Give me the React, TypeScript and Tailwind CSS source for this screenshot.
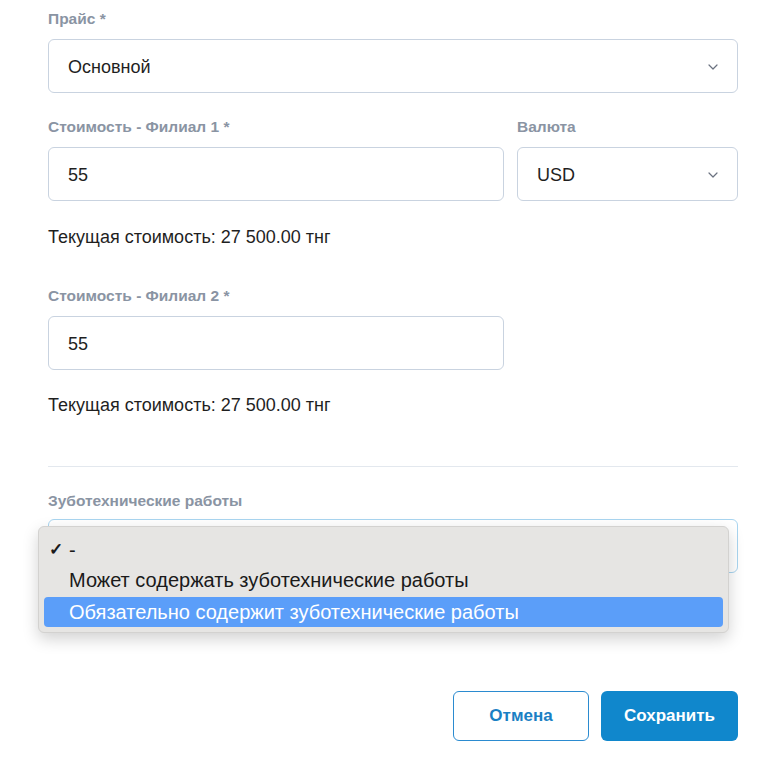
import React from 'react';

// Поле формы: подпись + контрол
const Label: React.FC<{ children: React.ReactNode; mb?: string }> = ({ children, mb = 'mb-[10px]' }) => (
  <div className={`h-5 leading-5 text-[15.5px] font-semibold text-[#8a94a3] ${mb}`}>{children}</div>
);

const Chevron = () => (
  <svg width="10" height="6" viewBox="0 0 10 6" fill="none" className="text-[#6b7280]">
    <path d="M1 1l4 4 4-4" stroke="currentColor" strokeWidth="1.2" strokeLinecap="round" strokeLinejoin="round" />
  </svg>
);

const SelectBox: React.FC<{ value: string }> = ({ value }) => (
  <div className="h-[54px] rounded-md border border-[#c9d3e0] bg-white flex items-center justify-between pl-[19px] pr-[19px] pt-[2px] text-[18px] text-[#1f1f1f]">
    <span>{value}</span>
    <Chevron />
  </div>
);

const Input: React.FC<{ value: string }> = ({ value }) => (
  <div className="h-[54px] rounded-md border border-[#c9d3e0] bg-white flex items-center pl-[19px] pt-[2px] text-[18px] text-[#1f1f1f]">
    {value}
  </div>
);

export default function App() {
  return (
    <div
      className="w-[769px] h-[760px] bg-white overflow-hidden"
      style={{ fontFamily: '"Liberation Sans", Arial, sans-serif' }}
    >
      <div className="ml-[48px] w-[690px] pt-[9px]">
        {/* Прайс */}
        <Label>Прайс *</Label>
        <SelectBox value="Основной" />

        {/* Филиал 1 + валюта */}
        <div className="flex gap-[13px] mt-[24px]">
          <div className="w-[456px]">
            <Label>Стоимость - Филиал 1 *</Label>
            <Input value="55" />
          </div>
          <div className="flex-1">
            <Label>Валюта</Label>
            <SelectBox value="USD" />
          </div>
        </div>
        <div className="mt-[24px] h-6 leading-6 text-[18px] text-[#1f1f1f]">Текущая стоимость: 27 500.00 тнг</div>

        {/* Филиал 2 */}
        <div className="mt-[37px] w-[456px]">
          <Label>Стоимость - Филиал 2 *</Label>
          <Input value="55" />
        </div>
        <div className="mt-[23px] h-6 leading-6 text-[18px] text-[#1f1f1f]">Текущая стоимость: 27 500.00 тнг</div>

        <div className="mt-[49px] h-px bg-[#e3e8ee]" />

        {/* Зуботехнические работы */}
        <div className="mt-[24px]">
          <Label mb="mb-[8px]">Зуботехнические работы</Label>
          <div className="relative">
            <div className="h-[54px] rounded-md border border-[#a9d5f0] bg-white" />
            {/* Выпадающее меню */}
            <div className="absolute left-[-10px] top-[7px] w-[691px] h-[107px] rounded-[6px] bg-[#e6e5e3] border border-[#d3d2d0] shadow-[0_6px_16px_rgba(0,0,0,0.18)] pt-[8px] px-[5px]">
              <div className="h-[30px] flex items-center pl-[5px] text-[20px] text-[#1a1a1a]">
                <span className="w-[20px] text-[17px] font-bold">✓</span>
                <span>-</span>
              </div>
              <div className="h-[30px] flex items-center pl-[25px] text-[20px] text-[#1a1a1a]">
                Может содержать зуботехнические работы
              </div>
              <div className="mt-[2px] h-[30px] flex items-center pl-[25px] rounded-[4px] bg-[#5b9ef9] text-[20px] text-white">
                Обязательно содержит зуботехнические работы
              </div>
            </div>
          </div>
        </div>

        {/* Кнопки */}
        <div className="mt-[118px] flex justify-end gap-[12px]">
          <button className="w-[136px] h-[50px] rounded-md border border-[#2b8bd0] bg-white text-[#1a7fc4] text-[17px] font-bold">
            Отмена
          </button>
          <button className="w-[137px] h-[50px] rounded-md bg-[#1087cc] text-white text-[17px] font-bold">
            Сохранить
          </button>
        </div>
      </div>
    </div>
  );
}
